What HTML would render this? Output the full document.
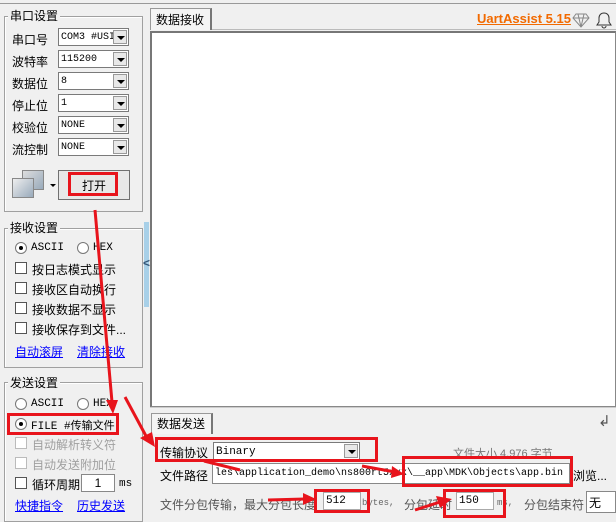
<!DOCTYPE html><html><head><meta charset="utf-8"><style>
*{box-sizing:border-box}
body{margin:0;width:616px;height:520px;background:#f0f0f0;font-family:"Liberation Sans","Noto Sans CJK SC",sans-serif;font-size:12px;color:#000;position:relative;overflow:hidden}
.a{position:absolute;white-space:nowrap}
.grp{position:absolute;border:1px solid #a0a0a0;box-shadow:inset 1px 1px 0 #fff}
.gt{position:absolute;background:#f0f0f0;padding:0 2px;font-size:12px}
.cb{position:absolute;height:18px;background:#fff;border:1px solid #7a7a7a;font-family:"Liberation Mono",monospace;font-size:10px;padding:3px 2px 0;overflow:hidden}
.cb b{position:absolute;right:1px;top:1px;width:14px;height:14px;background:#e8e8e8;border:1px solid #999}
.cb b:after{content:"";position:absolute;left:3px;top:5px;border:4px solid transparent;border-top:4px solid #000;border-bottom:0}
.chk{position:absolute;width:12px;height:12px;border:1px solid #555;background:#fff}
.rad{position:absolute;width:12px;height:12px;border:1px solid #777;border-radius:50%;background:#fff}
.rad.on:after{content:"";position:absolute;left:3px;top:3px;width:4px;height:4px;border-radius:50%;background:#000}
.mono{font-family:"Liberation Mono",monospace;font-size:11px}
.lnk{color:#00f;text-decoration:underline}
.rb{position:absolute;border:3px solid #e8141c}
.gray{color:#a0a0a0}
</style></head><body>
<div class="a" style="left:0;top:3px;width:616px;border-top:1px solid #999"></div>
<!-- left -->
<div class="grp" style="left:4px;top:16px;width:139px;height:196px"></div>
<div class="gt" style="left:8px;top:7px">串口设置</div>
<div class="a" style="left:12px;top:31px">串口号</div><div class="cb" style="left:58px;top:28px;width:71px">COM3 #USI<b></b></div>
<div class="a" style="left:12px;top:53px">波特率</div><div class="cb" style="left:58px;top:50px;width:71px">115200<b></b></div>
<div class="a" style="left:12px;top:75px">数据位</div><div class="cb" style="left:58px;top:72px;width:71px">8<b></b></div>
<div class="a" style="left:12px;top:97px">停止位</div><div class="cb" style="left:58px;top:94px;width:71px">1<b></b></div>
<div class="a" style="left:12px;top:119px">校验位</div><div class="cb" style="left:58px;top:116px;width:71px">NONE<b></b></div>
<div class="a" style="left:12px;top:141px">流控制</div><div class="cb" style="left:58px;top:138px;width:71px">NONE<b></b></div>
<div class="a" style="left:22px;top:170px;width:22px;height:20px;border:1px solid #888;background:linear-gradient(135deg,#ddd,#9ab)"></div>
<div class="a" style="left:12px;top:178px;width:22px;height:20px;border:1px solid #888;background:linear-gradient(135deg,#eee,#9ab)"></div>
<div class="a" style="left:50px;top:184px;border:3px solid transparent;border-top:3px solid #000"></div>
<div class="a" style="left:58px;top:170px;width:72px;height:30px;border:1px solid #707070;background:#e8e8e8"></div>
<div class="a" style="left:82px;top:177px">打开</div>
<div class="grp" style="left:4px;top:228px;width:139px;height:140px"></div>
<div class="gt" style="left:8px;top:219px">接收设置</div>
<div class="rad on" style="left:15px;top:242px"></div><div class="a mono" style="left:31px;top:242px">ASCII</div>
<div class="rad" style="left:77px;top:242px"></div><div class="a mono" style="left:93px;top:242px">HEX</div>
<div class="chk" style="left:15px;top:262px"></div><div class="a" style="left:32px;top:261px">按日志模式显示</div>
<div class="chk" style="left:15px;top:282px"></div><div class="a" style="left:32px;top:281px">接收区自动换行</div>
<div class="chk" style="left:15px;top:302px"></div><div class="a" style="left:32px;top:301px">接收数据不显示</div>
<div class="chk" style="left:15px;top:322px"></div><div class="a" style="left:32px;top:321px">接收保存到文件...</div>
<div class="a lnk" style="left:15px;top:343px">自动滚屏</div><div class="a lnk" style="left:77px;top:343px">清除接收</div>
<div class="grp" style="left:4px;top:382px;width:139px;height:140px"></div>
<div class="gt" style="left:8px;top:374px">发送设置</div>
<div class="rad" style="left:15px;top:398px"></div><div class="a mono" style="left:31px;top:398px">ASCII</div>
<div class="rad" style="left:77px;top:398px"></div><div class="a mono" style="left:93px;top:398px">HEX</div>
<div class="rad on" style="left:15px;top:418px"></div><div class="a mono" style="left:31px;top:417px">FILE #传输文件</div>
<div class="chk" style="left:15px;top:437px;border-color:#bbb"></div><div class="a gray" style="left:32px;top:436px">自动解析转义符</div>
<div class="chk" style="left:15px;top:457px;border-color:#bbb"></div><div class="a gray" style="left:32px;top:456px">自动发送附加位</div>
<div class="chk" style="left:15px;top:477px"></div><div class="a" style="left:32px;top:476px">循环周期</div>
<div class="a" style="left:81px;top:474px;width:34px;height:18px;background:#fff;border:1px solid #888;text-align:center;line-height:16px">1</div><div class="a mono" style="left:119px;top:478px">ms</div>
<div class="a lnk" style="left:15px;top:497px">快捷指令</div><div class="a lnk" style="left:77px;top:497px">历史发送</div>
<div class="a" style="left:144px;top:222px;width:5px;height:85px;background:#a8d0e8"></div>
<div class="a" style="left:143px;top:256px;color:#357;font-weight:bold;font-size:12px">&lt;</div>
<!-- right -->
<div class="a" style="left:150px;top:8px;width:62px;height:22px;border:1px solid #999;border-bottom:none;border-right:2px solid #777;background:#f4f4f4"></div>
<div class="a" style="left:156px;top:11px">数据接收</div>
<div class="a" style="left:212px;top:29px;width:404px;border-top:1px solid #bbb"></div>
<div class="a" style="left:150px;top:31px;width:466px;height:376px;border:1px solid #888;border-left:2px solid #777;border-top:2px solid #777;background:#fff"></div>
<div class="a" style="left:477px;top:11px;color:#f26a00;font-weight:bold;text-decoration:underline;font-size:13px">UartAssist 5.15</div>
<svg class="a" style="left:572px;top:12px" width="18" height="16"><path d="M4 2h10l3 4-8 9-8-9z M1 6h16 M6 2l3 13 3-13" fill="none" stroke="#888"/></svg>
<svg class="a" style="left:596px;top:11px" width="16" height="18"><path d="M8 2c-3 0-5 2-5 5v4l-2 3h14l-2-3v-4c0-3-2-5-5-5z M6 15a2 2 0 0 0 4 0" fill="none" stroke="#333"/></svg>
<div class="a" style="left:150px;top:407px;width:466px;height:6px;background:#f0f0f0;border-top:1px solid #ccc"></div>
<div class="a" style="left:151px;top:413px;width:62px;height:21px;border:1px solid #999;border-bottom:none;border-right:2px solid #777;background:#f4f4f4"></div>
<div class="a" style="left:157px;top:415px">数据发送</div>
<div class="a" style="left:598px;top:412px;font-size:15px;color:#555">↲</div>
<div class="a" style="left:160px;top:444px">传输协议</div>
<div class="cb" style="left:213px;top:442px;width:147px;font-size:11px">Binary<b></b></div>
<div class="a" style="left:453px;top:445px;color:#777;font-size:11px">文件大小 4,976 字节</div>
<div class="a" style="left:160px;top:467px">文件路径</div>
<div class="a mono" style="left:212px;top:463px;width:358px;height:21px;background:#fff;border:1px solid #888;padding:4px 2px;overflow:hidden;font-size:10px">les\application_demo\ns800rt5xxx\__app\MDK\Objects\app.bin</div>
<div class="a" style="left:573px;top:467px">浏览...</div>
<div class="a" style="left:160px;top:496px;color:#555">文件分包传输，最大分包长度</div>
<div class="a mono" style="left:323px;top:492px;width:38px;height:18px;background:#fff;border:1px solid #aaa;padding:2px">512</div>
<div class="a mono" style="left:362px;top:498px;color:#666;font-size:9px">bytes,</div>
<div class="a" style="left:404px;top:496px;color:#555">分包延时</div>
<div class="a mono" style="left:456px;top:492px;width:38px;height:18px;background:#fff;border:1px solid #aaa;padding:2px">150</div>
<div class="a mono" style="left:497px;top:498px;color:#666;font-size:9px">ms,</div>
<div class="a" style="left:524px;top:496px;color:#555">分包结束符</div>
<div class="a" style="left:586px;top:491px;width:30px;height:22px;background:#fff;border:1px solid #888;padding:2px">无</div>
<!-- red boxes -->
<div class="rb" style="left:68px;top:172px;width:50px;height:24px"></div>
<div class="rb" style="left:7px;top:413px;width:112px;height:22px"></div>
<div class="rb" style="left:155px;top:437px;width:223px;height:25px"></div>
<div class="rb" style="left:402px;top:456px;width:171px;height:31px"></div>
<div class="rb" style="left:314px;top:489px;width:56px;height:24px"></div>
<div class="rb" style="left:443px;top:489px;width:63px;height:29px"></div>
<svg class="a" style="left:0;top:0" width="616" height="520"><g stroke="#e8141c" stroke-width="3" fill="#e8141c">
<line x1="95" y1="210" x2="112" y2="402"/><polygon points="106,400 118,400 113,414" stroke="none"/>
<line x1="125" y1="397" x2="146" y2="436"/><polygon points="140,438 152,432 155,447" stroke="none"/>
<line x1="204" y1="461" x2="240" y2="470"/>
<line x1="268" y1="500" x2="305" y2="499"/><polygon points="303,493 303,505 316,499" stroke="none"/>
<line x1="415" y1="510" x2="440" y2="502"/><polygon points="436,496 440,508 452,499" stroke="none"/>
<line x1="362" y1="466" x2="395" y2="472"/><polygon points="392,466 391,478 404,474" stroke="none"/>
</g></svg>
</body></html>
